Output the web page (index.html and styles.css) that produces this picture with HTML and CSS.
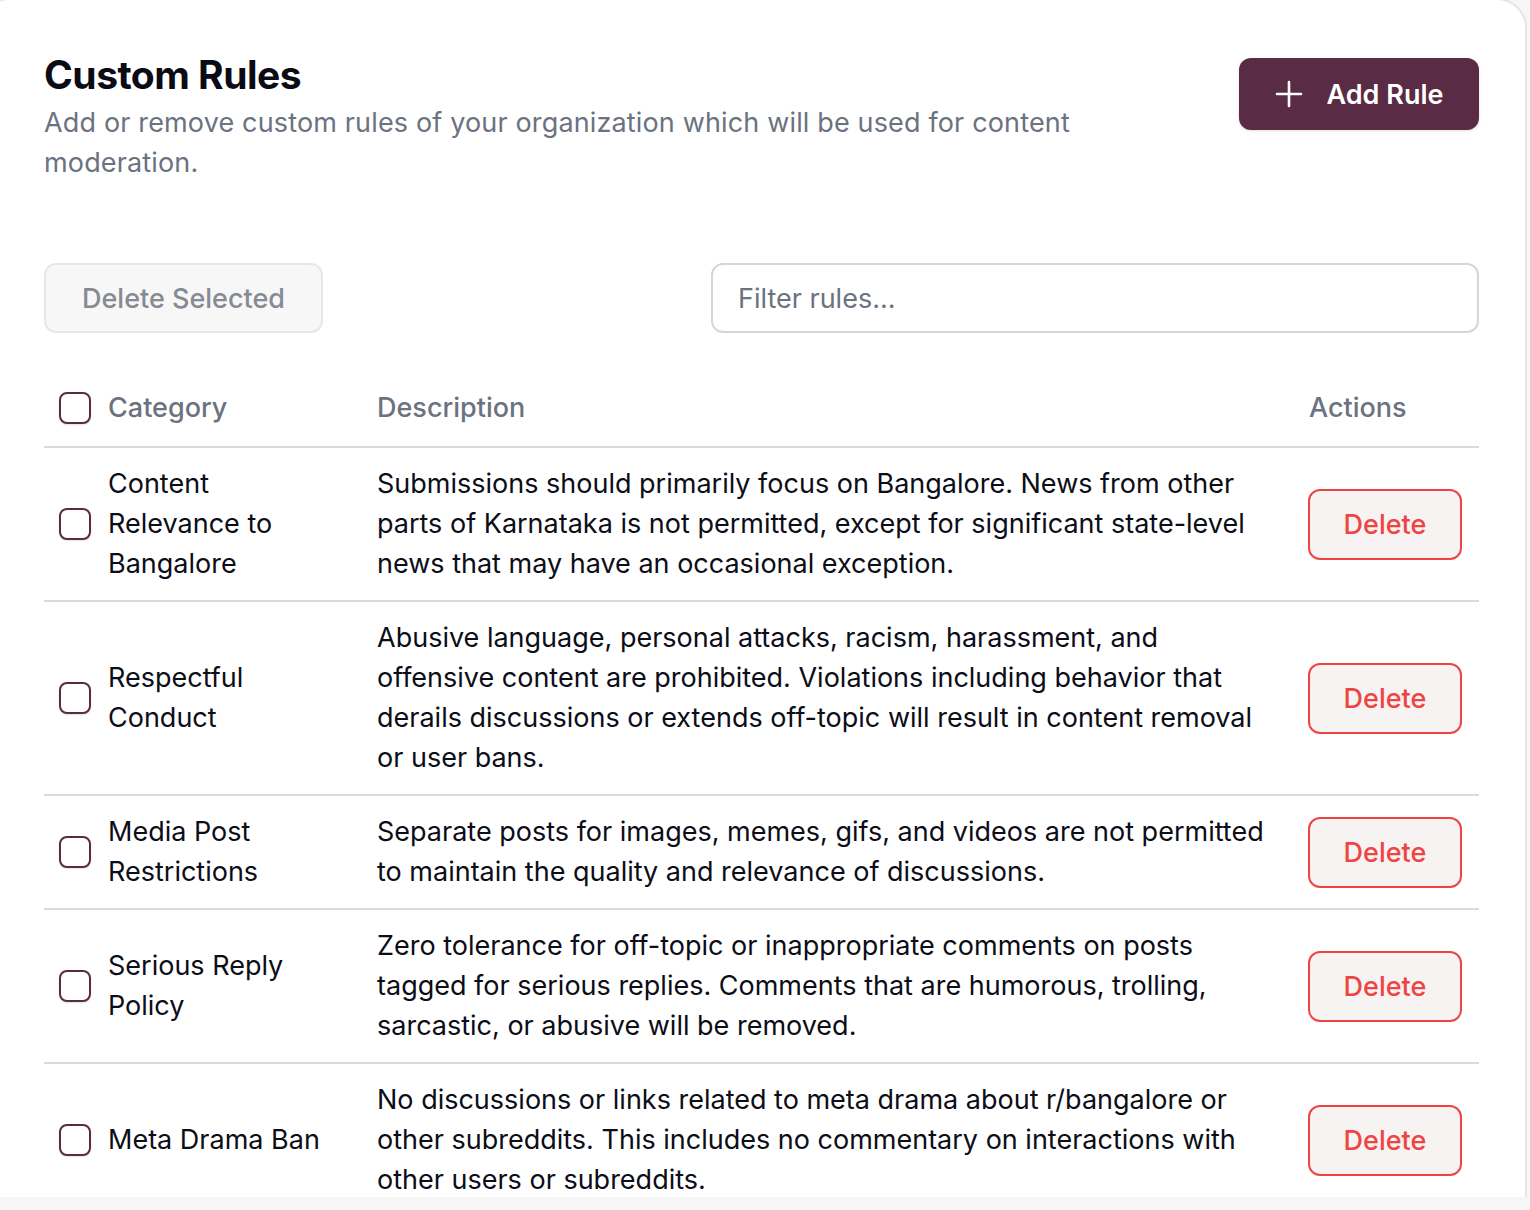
FILE: index.html
```html
<!DOCTYPE html>
<html lang="en">
<head>
<meta charset="utf-8">
<title>Custom Rules</title>
<link rel="stylesheet" href="styles.css">
</head>
<body>
<div class="card">
  <header class="header">
    <div class="header-text">
      <h1 class="title">Custom Rules</h1>
      <p class="subtitle">Add or remove custom rules of your organization which will be used for content moderation.</p>
    </div>
    <button class="btn-add" type="button">
      <svg class="plus" width="28" height="28" viewBox="0 0 28 28" aria-hidden="true"><path d="M14 2v24M2 14h24" stroke="#fff" stroke-width="2.6" stroke-linecap="round" fill="none"/></svg>
      <span>Add Rule</span>
    </button>
  </header>

  <div class="toolbar">
    <button class="btn-delete-selected" type="button">Delete Selected</button>
    <input class="filter" type="text" placeholder="Filter rules...">
  </div>

  <div class="table">
    <div class="row head">
      <div class="cell check"><span class="box"></span></div>
      <div class="cell cat">Category</div>
      <div class="cell desc">Description</div>
      <div class="cell act">Actions</div>
    </div>
    <div class="row">
      <div class="cell check"><span class="box"></span></div>
      <div class="cell cat">Content Relevance to Bangalore</div>
      <div class="cell desc">Submissions should primarily focus on Bangalore. News from other parts of Karnataka is not permitted, except for significant state-level news that may have an occasional exception.</div>
      <div class="cell act"><button class="btn-del" type="button">Delete</button></div>
    </div>
    <div class="row">
      <div class="cell check"><span class="box"></span></div>
      <div class="cell cat">Respectful Conduct</div>
      <div class="cell desc">Abusive language, personal attacks, racism, harassment, and offensive content are prohibited. Violations including behavior that derails discussions or extends off-topic will result in content removal or user bans.</div>
      <div class="cell act"><button class="btn-del" type="button">Delete</button></div>
    </div>
    <div class="row">
      <div class="cell check"><span class="box"></span></div>
      <div class="cell cat">Media Post Restrictions</div>
      <div class="cell desc">Separate posts for images, memes, gifs, and videos are not permitted to maintain the quality and relevance of discussions.</div>
      <div class="cell act"><button class="btn-del" type="button">Delete</button></div>
    </div>
    <div class="row">
      <div class="cell check"><span class="box"></span></div>
      <div class="cell cat">Serious Reply Policy</div>
      <div class="cell desc">Zero tolerance for off-topic or inappropriate comments on posts tagged for serious replies. Comments that are humorous, trolling, sarcastic, or abusive will be removed.</div>
      <div class="cell act"><button class="btn-del" type="button">Delete</button></div>
    </div>
    <div class="row">
      <div class="cell check"><span class="box"></span></div>
      <div class="cell cat">Meta Drama Ban</div>
      <div class="cell desc">No discussions or links related to meta drama about r/bangalore or other subreddits. This includes no commentary on interactions with other users or subreddits.</div>
      <div class="cell act"><button class="btn-del" type="button">Delete</button></div>
    </div>
  </div>
</div>
</body>
</html>
```

FILE: styles.css
```css
* { box-sizing: border-box; }
html, body { margin: 0; padding: 0; }
body {
  background: #f6f6f7;
  font-family: Inter, "Noto Sans", sans-serif;
  color: #0b0d17;
  overflow: hidden;
  height: 1210px;
}
.card {
  width: 1548px;
  margin: -2px 0 0 -21px;
  height: 1199px;
  background: #fff;
  border: 2px solid #e4e5e8;
  border-bottom: none;
  border-radius: 30px 30px 0 0;
  padding: 49px 46px 0 63px;
}
.header {
  display: flex;
  justify-content: space-between;
  align-items: flex-start;
}
.header-text { max-width: 1100px; }
.title {
  margin: 0;
  font-size: 39px;
  font-weight: 700;
  line-height: 52px;
  letter-spacing: -0.5px;
  color: #0a0b14;
}
.subtitle {
  margin: 2px 0 0;
  font-size: 27px;
  line-height: 40px;
  letter-spacing: 0.15px;
  color: #6b7280;
}
.btn-add {
  margin-top: 9px;
  height: 72px;
  width: 240px;
  border: none;
  border-radius: 12px;
  background: #5a2b44;
  color: #fff;
  font-family: inherit;
  font-size: 27px;
  font-weight: 600;
  display: flex;
  align-items: center;
  justify-content: center;
  gap: 24px;
  box-shadow: 0 1px 3px rgba(0,0,0,0.12);
}
.toolbar {
  margin-top: 80px;
  display: flex;
  justify-content: space-between;
  align-items: center;
}
.btn-delete-selected {
  height: 70px;
  width: 279px;
  border: 2px solid #e7e7ea;
  border-radius: 12px;
  background: #f7f7f7;
  color: #868a93;
  font-family: inherit;
  font-size: 27px;
  font-weight: 500;
}
.filter {
  width: 768px;
  height: 70px;
  border: 2px solid #d4d6db;
  border-radius: 12px;
  padding: 0 25px;
  font-family: inherit;
  font-size: 27px;
  color: #111;
  background: #fff;
}
.filter::placeholder { color: #6b7280; }
.table { margin-top: 38px; }
.row {
  display: grid;
  grid-template-columns: 64px 269px 932px 170px;
  align-items: center;
  border-bottom: 2px solid #d8dadf;
}
.row.head { padding: 0 0 2px; height: 77px; }
.row:not(.head) { padding: 16px 0; }
.row.head .cell {
  color: #6b7280;
  font-weight: 500;
}
.cell { font-size: 27px; line-height: 40px; }
.check { padding-left: 15px; display: flex; align-items: center; }
.box {
  width: 32px;
  height: 32px;
  border: 2px solid #5a2b44;
  border-radius: 8px;
  background: #fff;
  box-shadow: 0 1px 2px rgba(0,0,0,0.12);
}
.cat { padding-right: 44px; }
.desc { padding-right: 36px; }
.btn-del {
  width: 154px;
  height: 71px;
  margin-left: -1px;
  border: 2px solid #ef4444;
  border-radius: 12px;
  background: #f8f3f3;
  color: #ef4444;
  font-family: inherit;
  font-size: 27px;
  font-weight: 500;
}
```
